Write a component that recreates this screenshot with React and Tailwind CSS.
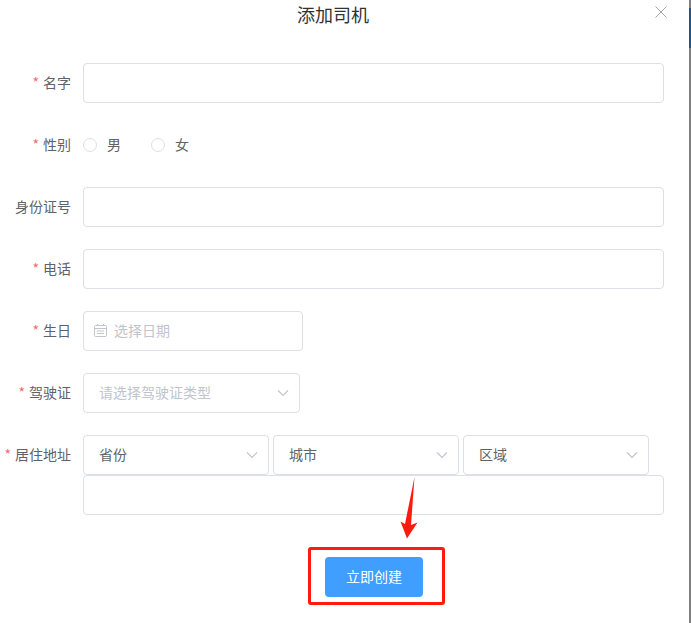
import React from 'react';

const font = { fontFamily: '"Noto Sans CJK SC", "Liberation Sans", sans-serif' };

const Chevron = () => (
  <svg className="mt-[-1px]" width="14" height="14" viewBox="0 0 14 14" fill="none" stroke="#c0c4cc" strokeWidth="1.1">
    <path d="M2 4.5 L7 9.5 L12 4.5" />
  </svg>
);

const Row = ({ label, required = true, children, className = 'mb-[22px]' }) => (
  <div className={`flex ${className}`}>
    <label className="w-[71px] mr-3 h-10 pb-[2px] shrink-0 flex items-center justify-end text-sm text-[#606266] whitespace-nowrap">
      {required && <span className="text-[#f56c6c] mr-1">*</span>}
      {label}
    </label>
    {children}
  </div>
);

const TextInput = ({ className = 'w-[581px]' }) => (
  <input className={`block h-10 border border-[#dcdfe6] rounded bg-white outline-none px-[15px] ${className}`} />
);

const Select = ({ text, placeholder = false, className }) => (
  <div className={`h-10 border border-[#dcdfe6] rounded bg-white flex items-center justify-between pl-[15px] pr-[9px] text-sm ${placeholder ? 'text-[#c0c4cc]' : 'text-[#606266]'} ${className}`}>
    <span className="mb-[2px]">{text}</span>
    <Chevron />
  </div>
);

const Radio = ({ label, className = '' }) => (
  <div className={`flex items-center text-sm text-[#606266] ${className}`}>
    <span className="w-[14px] h-[14px] rounded-full border border-[#dcdfe6] bg-white mr-[10px]" />
    <span className="mb-[2px]">{label}</span>
  </div>
);

export default function App() {
  return (
    <div className="flex w-[691px] h-[623px] bg-white overflow-hidden" style={font}>
      <div className="w-[689px] shrink-0">
        {/* Header */}
        <div className="relative h-[63px] pt-[1px] pr-[23px] text-center text-lg leading-[26px] text-[#303133]">
          添加司机
          <button className="absolute top-[6px] right-[22px] text-[#a3a6ad]">
            <svg width="12" height="12" viewBox="0 0 12 12" stroke="currentColor" strokeWidth="1">
              <path d="M0.5 0.5 L11.5 11.5 M11.5 0.5 L0.5 11.5" />
            </svg>
          </button>
        </div>

        {/* Form */}
        <Row label="名字">
          <TextInput />
        </Row>
        <Row label="性别">
          <div className="flex items-center h-10">
            <Radio label="男" className="w-[68px]" />
            <Radio label="女" />
          </div>
        </Row>
        <Row label="身份证号" required={false}>
          <TextInput />
        </Row>
        <Row label="电话">
          <TextInput />
        </Row>
        <Row label="生日">
          <div className="w-[220px] h-10 border border-[#dcdfe6] rounded flex items-center pl-[10px] text-sm text-[#c0c4cc]">
            <svg className="mr-[6px]" width="14" height="14" viewBox="0 0 14 14" fill="none" stroke="#c0c4cc" strokeWidth="1">
              <rect x="0.5" y="1.5" width="12" height="11" rx="1" />
              <path d="M0.5 4.5 H12.5 M3 7 H10 M3 9.5 H10 M3.5 0 V1.5 M9.5 0 V1.5" />
            </svg>
            <span className="mb-[2px]">选择日期</span>
          </div>
        </Row>
        <Row label="驾驶证">
          <Select text="请选择驾驶证类型" placeholder className="w-[217px]" />
        </Row>
        <Row label="居住地址" className="">
          <div className="w-[581px]">
            <div className="flex gap-1">
              <Select text="省份" className="w-[186px]" />
              <Select text="城市" className="w-[186px]" />
              <Select text="区域" className="w-[186px]" />
            </div>
            <TextInput className="w-full" />
          </div>
        </Row>

        {/* Footer */}
        <div className="mt-[42px] ml-[325px] w-[98px] relative">
          <button className="block w-[98px] h-10 pb-[2px] rounded bg-[#409eff] text-white text-sm">
            立即创建
          </button>
          <div className="absolute top-[-10px] left-[-17px] w-[137px] h-[58px] border-[3px] border-[#ff1a0f] rounded-[3px]" />
        </div>
      </div>

      {/* Window behind the dialog */}
      <div className="w-[2px] h-full flex flex-col bg-[#808080]">
        <div className="h-2" />
        <div className="h-10 bg-[#1f5488]" />
      </div>

      {/* Annotation arrow */}
      <svg className="absolute left-[395px] top-[472px]" width="30" height="70" viewBox="395 472 30 70">
        <path d="M414.5 477 L411 525 L417.5 522.5 L407 538.5 L400.5 521.5 L405 524 Z" fill="#ff1a0f" />
      </svg>
    </div>
  );
}
